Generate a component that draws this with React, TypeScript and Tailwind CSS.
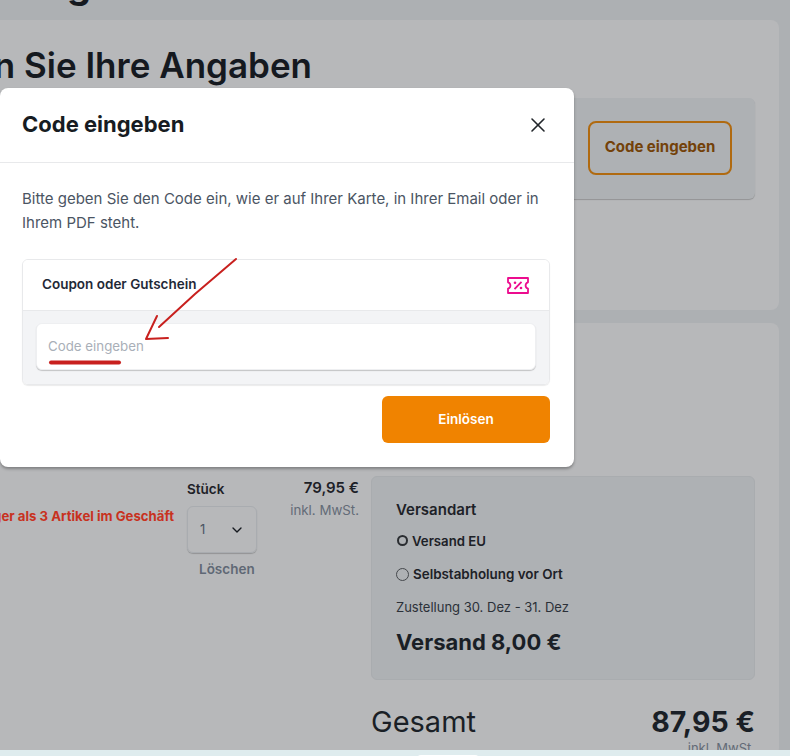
import { ChevronDown, X } from 'lucide-react';

function TicketIcon() {
  return (
    <svg width="22" height="17" viewBox="0 0 22 17" fill="none" stroke="#ec0c8e" strokeWidth="1.800">
      <path d="M1 1h20v4.300c-1.600.5-2.400 1.700-2.400 3.200s.8 2.700 2.400 3.200V16H1v-4.300c1.600-.5 2.400-1.700 2.400-3.200S2.600 5.800 1 5.300z" strokeLinejoin="round" />
      <path d="M14.500 4.800l-7 7.400" />
      <circle cx="8" cy="5.800" r="1.300" fill="#ec0c8e" stroke="none" />
      <circle cx="14" cy="11" r="1.300" fill="#ec0c8e" stroke="none" />
    </svg>
  );
}

function Annotation() {
  return (
    <svg className="absolute left-0 top-0 pointer-events-none" width="300" height="400" fill="none" stroke="#c8201e" strokeLinecap="round" strokeLinejoin="round">
      <path d="M236 259L195 294L159 327" strokeWidth="2" />
      <path d="M157 316L146 339L168 338" strokeWidth="2" />
      <path d="M51 362.500H119" strokeWidth="4" />
    </svg>
  );
}

function Modal() {
  return (
    <div className="absolute left-0 top-[88px] w-[574px] h-[379px] bg-white rounded-lg shadow-[0_2px_3px_rgba(0,0,0,0.3)]">
      <div className="h-[75px] pl-[22px] pr-6 flex items-center justify-between border-b border-[#e8e9eb]">
        <h3 className="mb-[2px] text-[22px] font-bold text-[#171c22]">Code eingeben</h3>
        <X className="w-6 h-6 text-[#22262b]" strokeWidth={1.600} />
      </div>
      <div className="pl-[22px] pr-6 pt-6">
        <p className="text-[15px] leading-6 text-[#4b5563]">
          Bitte geben Sie den Code ein, wie er auf Ihrer Karte, in Ihrer Email oder in Ihrem PDF steht.
        </p>
        <div className="mt-6 rounded-md border border-[#e8e9eb] shadow-[0_1px_1px_rgba(0,0,0,0.08)] overflow-hidden">
          <div className="h-[51px] pl-[19px] pr-[20px] flex items-center justify-between bg-white border-b border-[#e8e9eb]">
            <span className="mb-[2px] text-[13.500px] font-semibold text-[#1f2937]">Coupon oder Gutschein</span>
            <TicketIcon />
          </div>
          <div className="bg-[#f3f4f6] px-[13px] pt-[12px] pb-[14px]">
            <div className="h-[47px] bg-white rounded-md border border-[#eeeff1] shadow-[0_1px_1px_rgba(0,0,0,0.2)] pl-[11px] flex items-center text-[13.300px] text-[#a9afb8]">
              Code eingeben
            </div>
          </div>
        </div>
        <div className="flex justify-end mt-[11px]">
          <button className="w-[168px] h-[47px] rounded-md bg-[#f08300] text-white text-[13.500px] font-semibold">
            Einlösen
          </button>
        </div>
      </div>
    </div>
  );
}

export default function App() {
  return (
    <div className="relative w-[790px] h-[756px] overflow-hidden font-['Inter',sans-serif] bg-[#dfecee]">
      <div className="h-[750px] overflow-hidden bg-[#adb0b3] flex flex-col">
        <div className="h-5 shrink-0 relative overflow-hidden">
          <h1 className="absolute right-[699px] bottom-[14px] text-[38px] leading-[44px] font-bold text-[#15191f] whitespace-nowrap">
            Bestellung
          </h1>
        </div>

        {/* Angaben */}
        <section className="shrink-0 h-[290px] -ml-5 mr-[11px] rounded-lg bg-[#b7b8ba] pl-5 pr-6">
          <div className="pt-[23px] h-[78px] flex justify-end w-[312px]">
            <h2 className="text-[35px] leading-[44px] font-semibold text-[#15191f] whitespace-nowrap">
              Ergänzen Sie Ihre Angaben
            </h2>
          </div>
          <div className="h-[101px] rounded-md bg-[#aeb1b4] shadow-[0_1px_1px_rgba(0,0,0,0.2)] flex items-center justify-end pr-[23px] pb-[2px]">
            <button className="w-[144px] h-[54px] rounded-lg border-2 border-[#b06a10] text-[15px] font-bold text-[#734109]">
              Code eingeben
            </button>
          </div>
        </section>

        {/* Warenkorb */}
        <section className="mt-[13px] flex-1 -ml-5 mr-[11px] rounded-lg bg-[#b7b8ba] pt-[153px] pr-6 flex gap-3">
          <div className="w-[379px] shrink-0 flex">
            <div className="w-[194px] shrink-0 pt-[32px] text-[13.200px] leading-4 font-bold text-[#c8321f] whitespace-nowrap flex justify-end">
              <span>Weniger als 3 Artikel im Geschäft</span>
            </div>
            <div className="ml-[13px] w-[70px] shrink-0 pt-[5px]">
              <div className="text-[13.500px] leading-4 font-semibold text-[#1d2127]">Stück</div>
              <div className="mt-[9px] h-[47px] rounded-md border border-[#a9acb0] shadow-[0_1px_1px_rgba(0,0,0,0.2)] flex items-center justify-between pl-3 pr-[11px] text-[13px] text-[#4b5563]">
                <span>1</span>
                <ChevronDown className="w-4 h-4 text-[#15191f]" strokeWidth={2} />
              </div>
              <div className="mt-[6px] pl-3 text-[13.500px] leading-5 font-semibold text-[#5f6875] whitespace-nowrap">Löschen</div>
            </div>
            <div className="flex-1 pt-[4px] text-right">
              <div className="text-[15px] leading-4 font-semibold text-[#1d2127] whitespace-nowrap">79,95 €</div>
              <div className="mt-[6px] text-[13.300px] leading-4 text-[#636b77] whitespace-nowrap">inkl. MwSt.</div>
            </div>
          </div>

          <div className="flex-1">
            <div className="h-[204px] rounded-md bg-[#aeb1b4] border border-[#a9acaf] pl-6 pt-[23px] text-[#1d2127]">
              <div className="text-[15px] leading-5 font-semibold">Versandart</div>
              <div className="mt-[12px] flex items-center gap-[4px] h-5 text-[13.200px] font-semibold">
                <span className="ml-px mb-[3px] w-[11px] h-[11px] rounded-full border-2 border-[#2a2d31]" />
                Versand EU
              </div>
              <div className="mt-[12px] flex items-center gap-1 h-5 text-[13.400px] font-semibold">
                <span className="w-[13px] h-[13px] rounded-full border border-[#45484c]" />
                Selbstabholung vor Ort
              </div>
              <div className="mt-[13px] text-[13px] leading-5 text-[#2b3038]">Zustellung 30. Dez - 31. Dez</div>
              <div className="mt-[11px] text-[22px] leading-7 font-bold text-[#1a1f26]">Versand 8,00 €</div>
            </div>
            <div className="mt-[24px] flex items-start justify-between">
              <span className="text-[29px] leading-9 text-[#1a1f26]">Gesamt</span>
              <span className="text-[28.500px] leading-9 font-bold text-[#1a1f26]">87,95 €</span>
            </div>
            <div className="text-right text-[13px] leading-4 text-[#636b77]">inkl. MwSt.</div>
          </div>
        </section>
      </div>
      <div className="h-[6px] relative">
        <div className="absolute left-[417px] top-[5px] w-[62px] h-1 rounded-t-sm bg-white" />
      </div>

      <Modal />
      <Annotation />
    </div>
  );
}
